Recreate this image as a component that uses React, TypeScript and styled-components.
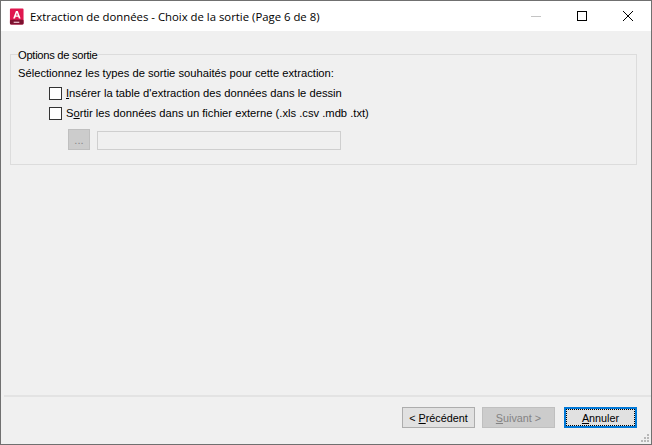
import React from 'react';
import styled, { createGlobalStyle } from 'styled-components';

const GlobalStyle = createGlobalStyle`
  html, body { margin: 0; padding: 0; background: #f0f0f0; }
  body { font-family: "Liberation Sans", Arial, sans-serif; font-size: 11.2px; color: #000; }
`;

const Window = styled.div`
  position: relative;
  box-sizing: border-box;
  width: 652px;
  height: 445px;
  display: flex;
  flex-direction: column;
  border: 1px solid #707070;
  background: #f0f0f0;
  overflow: hidden;
`;

const TitleBar = styled.div`
  flex: none;
  height: 30px;
  display: flex;
  align-items: center;
  padding-left: 8px;
  background: #fff;
`;

const AppIcon = styled.svg`
  flex: none;
  width: 15px;
  height: 17px;
  margin-right: 6px;
`;

const Title = styled.div`
  flex: 1;
  font-family: "Open Sans", "Noto Sans", sans-serif;
  font-size: 11.35px;
  white-space: nowrap;
`;

const WindowButton = styled.div`
  width: 46px;
  height: 30px;
  display: flex;
  align-items: center;
  justify-content: center;
`;

const Content = styled.div`
  flex: 1;
  padding: 15px 14px 0 9px;
`;

const Group = styled.fieldset`
  box-sizing: border-box;
  margin: 0;
  height: 119px;
  padding: 0 0 0 7px;
  border: 1px solid #dcdcdc;
`;

const Legend = styled.legend`
  padding: 2px 1px 0 0;
  line-height: 14px;
  letter-spacing: -0.3px;
`;

const Intro = styled.div`
  line-height: 14px;
  margin-top: 4px;
`;

const Option = styled.label`
  display: flex;
  align-items: center;
  height: 14px;
  margin: 6px 0 0 31px;
  white-space: nowrap;
`;

const Check = styled.span`
  box-sizing: border-box;
  flex: none;
  width: 13px;
  height: 13px;
  margin-right: 4px;
  border: 1px solid #333;
  background: #fff;
`;

const PathRow = styled.div`
  display: flex;
  align-items: flex-end;
  gap: 7px;
  margin: 9px 0 0 50px;
`;

const BrowseButton = styled.div`
  box-sizing: border-box;
  width: 22px;
  height: 21px;
  display: flex;
  align-items: center;
  justify-content: center;
  background: #cccccc;
  border: 1px solid #bfbfbf;
  color: #8a8a8a;
`;

const PathInput = styled.div`
  box-sizing: border-box;
  width: 244px;
  height: 19px;
  border: 1px solid #cfcfcf;
  background: #f0f0f0;
`;

const Separator = styled.div`
  flex: none;
  height: 2px;
  margin-left: 3px;
  background: #e3e3e3;
`;

const Footer = styled.div`
  flex: none;
  display: flex;
  justify-content: flex-end;
  padding: 10px 14px 16px 0;
`;

const DialogButton = styled.div<{ $disabled?: boolean; $focused?: boolean }>`
  box-sizing: border-box;
  position: relative;
  width: 73px;
  height: 21px;
  margin-left: ${(p) => (p.$focused ? '9px' : '7px')};
  display: flex;
  align-items: center;
  justify-content: center;
  white-space: nowrap;
  font-size: 10.8px;
  background: ${(p) => (p.$disabled ? '#cccccc' : '#e1e1e1')};
  border: ${(p) => (p.$focused ? '2px solid #0078d7' : `1px solid ${p.$disabled ? '#bfbfbf' : '#adadad'}`)};
  color: ${(p) => (p.$disabled ? '#838383' : '#000')};
`;

const FocusRing = styled.span`
  position: absolute;
  inset: 0;
  border: 1px dotted #000;
`;

const Grip = styled.svg`
  position: absolute;
  right: 2px;
  bottom: 2px;
  width: 8px;
  height: 8px;
`;

const Key = styled.span`
  text-decoration: underline;
  text-underline-offset: 1px;
`;

export default function App() {
  return (
    <>
      <GlobalStyle />
      <Window>
        <TitleBar>
          <AppIcon viewBox="0 0 16 18">
            <path d="M2 0.5h12.5a1 1 0 0 1 1 1V16a1.5 1.5 0 0 1-1.5 1.5H2.5A1.5 1.5 0 0 1 1 16V1.5a1 1 0 0 1 1-1z" fill="#e0174f" />
            <rect x="1" y="12.5" width="14.5" height="5" rx="1" fill="#7c1230" />
            <path d="M4.4 11 7.4 3h2l3 8h-1.9l-.6-1.7H7l-.6 1.7zM7.5 7.8h1.9l-.95-2.8z" fill="#fff" />
            <rect x="5" y="14.5" width="6" height="1.4" fill="#e8b8c4" />
          </AppIcon>
          <Title>Extraction de données - Choix de la sortie (Page 6 de 8)</Title>
          <WindowButton>
            <svg width="10" height="10" viewBox="0 0 10 10">
              <rect x="0" y="5" width="10" height="1" fill="#c4c4c4" />
            </svg>
          </WindowButton>
          <WindowButton>
            <svg width="10" height="10" viewBox="0 0 10 10">
              <rect x="0.5" y="0.5" width="9" height="9" fill="none" stroke="#000" />
            </svg>
          </WindowButton>
          <WindowButton>
            <svg width="10" height="10" viewBox="0 0 10 10">
              <path d="M0 0l10 10M10 0L0 10" stroke="#000" strokeWidth="1" />
            </svg>
          </WindowButton>
        </TitleBar>
        <Content>
          <Group>
            <Legend>Options de sortie</Legend>
            <Intro>Sélectionnez les types de sortie souhaités pour cette extraction:</Intro>
            <Option>
              <Check />
              <span><Key>I</Key>nsérer la table d'extraction des données dans le dessin</span>
            </Option>
            <Option>
              <Check />
              <span>S<Key>o</Key>rtir les données dans un fichier externe (.xls .csv .mdb .txt)</span>
            </Option>
            <PathRow>
              <BrowseButton>...</BrowseButton>
              <PathInput />
            </PathRow>
          </Group>
        </Content>
        <Separator />
        <Footer>
          <DialogButton>&lt;&nbsp;<Key>P</Key>récédent</DialogButton>
          <DialogButton $disabled><Key>S</Key>uivant &gt;</DialogButton>
          <DialogButton $focused>
            <FocusRing />
            <span><Key>A</Key>nnuler</span>
          </DialogButton>
        </Footer>
        <Grip viewBox="0 0 8 8">
          <g fill="#b8b8b8">
            <rect x="6" y="0" width="2" height="2" />
            <rect x="3" y="3" width="2" height="2" />
            <rect x="6" y="3" width="2" height="2" />
            <rect x="0" y="6" width="2" height="2" />
            <rect x="3" y="6" width="2" height="2" />
            <rect x="6" y="6" width="2" height="2" />
          </g>
        </Grip>
      </Window>
    </>
  );
}
